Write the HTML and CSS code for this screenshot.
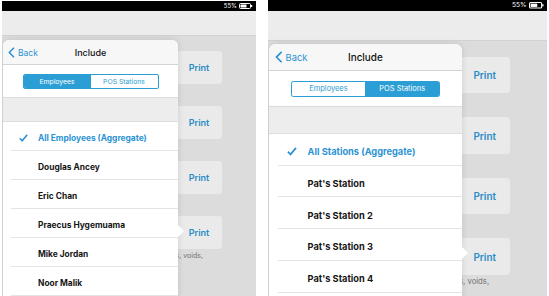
FILE: index.html
```html
<!DOCTYPE html>
<html lang="en">
<head>
    <meta charset="UTF-8">
    <meta name="viewport" content="width=device-width, initial-scale=1.0">
    <title>Include</title>
    <link rel="stylesheet" href="styles.css">
</head>
<body>
    <div class="screens">
        <!-- Employees tab -->
        <div class="device">
            <div class="status-bar">
                <span class="battery-text">55%</span>
                <svg class="battery" width="14" height="6" viewBox="0 0 14 6">
                    <rect x="0.5" y="0.5" width="11" height="5" rx="1" fill="none" stroke="#fff"/>
                    <rect x="1.5" y="1.5" width="6" height="3" fill="#fff"/>
                    <rect x="12" y="2" width="1.2" height="2" fill="#fff"/>
                </svg>
            </div>
            <div class="nav-bar"></div>
            <div class="content">
                <div class="reports">
                    <div class="print-card">Print</div>
                    <div class="print-card">Print</div>
                    <div class="print-card">Print</div>
                    <div class="print-card">Print</div>
                    <p class="report-note">Includes sales, refunds, voids,</p>
                </div>

                <div class="popover">
                    <div class="popover-header">
                        <a class="back-link">
                            <svg width="7" height="11" viewBox="0 0 7 11"><polyline points="6,0.8 1.3,5.5 6,10.2" fill="none" stroke="#2b93d3" stroke-width="1.5"/></svg>
                            <span>Back</span>
                        </a>
                        <span class="popover-title">Include</span>
                    </div>
                    <div class="segment-wrap">
                        <div class="segment">
                            <span class="segment-item active">Employees</span>
                            <span class="segment-item">POS Stations</span>
                        </div>
                    </div>
                    <div class="spacer-band"></div>
                    <ul class="choice-list">
                        <li class="choice selected">
                            <svg class="check" width="9" height="8" viewBox="0 0 9 8"><polyline points="0.8,4.3 3.2,6.7 8.2,0.8" fill="none" stroke="#2b93d3" stroke-width="1.6"/></svg>
                            All Employees (Aggregate)
                        </li>
                        <li class="choice">Douglas Ancey</li>
                        <li class="choice">Eric Chan</li>
                        <li class="choice">Praecus Hygemuama</li>
                        <li class="choice">Mike Jordan</li>
                        <li class="choice">Noor Malik</li>
                    </ul>
                </div>
            </div>
        </div>

        <!-- POS Stations tab -->
        <div class="device device-large">
            <div class="status-bar">
                <span class="battery-text">55%</span>
                <svg class="battery" width="14" height="6" viewBox="0 0 14 6">
                    <rect x="0.5" y="0.5" width="11" height="5" rx="1" fill="none" stroke="#fff"/>
                    <rect x="1.5" y="1.5" width="6" height="3" fill="#fff"/>
                    <rect x="12" y="2" width="1.2" height="2" fill="#fff"/>
                </svg>
            </div>
            <div class="nav-bar"></div>
            <div class="content">
                <div class="reports">
                    <div class="print-card">Print</div>
                    <div class="print-card">Print</div>
                    <div class="print-card">Print</div>
                    <div class="print-card">Print</div>
                    <p class="report-note">Includes sales, refunds, voids,</p>
                </div>

                <div class="popover">
                    <div class="popover-header">
                        <a class="back-link">
                            <svg width="7" height="11" viewBox="0 0 7 11"><polyline points="6,0.8 1.3,5.5 6,10.2" fill="none" stroke="#2b93d3" stroke-width="1.5"/></svg>
                            <span>Back</span>
                        </a>
                        <span class="popover-title">Include</span>
                    </div>
                    <div class="segment-wrap">
                        <div class="segment">
                            <span class="segment-item">Employees</span>
                            <span class="segment-item active">POS Stations</span>
                        </div>
                    </div>
                    <div class="spacer-band"></div>
                    <ul class="choice-list">
                        <li class="choice selected">
                            <svg class="check" width="9" height="8" viewBox="0 0 9 8"><polyline points="0.8,4.3 3.2,6.7 8.2,0.8" fill="none" stroke="#2b93d3" stroke-width="1.6"/></svg>
                            All Stations (Aggregate)
                        </li>
                        <li class="choice">Pat's Station</li>
                        <li class="choice">Pat's Station 2</li>
                        <li class="choice">Pat's Station 3</li>
                        <li class="choice">Pat's Station 4</li>
                    </ul>
                </div>
            </div>
        </div>
    </div>
</body>
</html>
```

FILE: styles.css
```css
body {
    margin: 0;
    background: #fff;
    font-family: Inter, "Liberation Sans", Arial, sans-serif;
    overflow: hidden;
}
.screens {
    display: flex;
    align-items: flex-start;
    gap: 12px;
    padding: 1px 0 0 2px;
}
.device {
    width: 254px;
    height: 300px;
    overflow: hidden;
    display: flex;
    flex-direction: column;
    background: #dcdcdc;
}
.device-large {
    zoom: 1.1;
    margin-top: -1px;
}
.device-large .nav-bar {
    height: 26px;
}
.device-large .popover {
    top: 3px;
}
.status-bar {
    height: 10px;
    background: #000;
    display: flex;
    justify-content: flex-end;
    align-items: center;
    gap: 2px;
    padding-right: 3px;
}
.battery-text {
    color: #fff;
    font-size: 6px;
    line-height: 1;
}
.nav-bar {
    height: 24px;
    background: #ececec;
    border-bottom: 1px solid #d2d2d2;
}
.content {
    position: relative;
    flex: 1;
}
.reports {
    display: flex;
    flex-direction: column;
    align-items: flex-end;
    gap: 22px;
    padding: 15px 34px 0 0;
}
.print-card {
    width: 46px;
    height: 33px;
    box-sizing: border-box;
    background: #eaeaea;
    border-radius: 3px;
    display: flex;
    align-items: center;
    justify-content: center;
    color: #2a8cc6;
    font-size: 9px;
    font-weight: 600;
}
.report-note {
    margin: -20px 19px 0 0;
    font-size: 7px;
    color: #707070;
    white-space: nowrap;
}
.popover {
    position: absolute;
    left: 1px;
    top: 4px;
    bottom: 0;
    width: 175px;
    background: #fff;
    border-radius: 6px 6px 0 0;
    box-shadow: 0 0 6px rgba(0, 0, 0, 0.12);
}
.popover::after {
    content: "";
    position: absolute;
    right: -6px;
    top: 185px;
    border-left: 6px solid #fff;
    border-top: 6px solid transparent;
    border-bottom: 6px solid transparent;
}
.popover-header {
    position: relative;
    height: 24px;
    background: #f7f7f7;
    border-radius: 6px 6px 0 0;
    border-bottom: 1px solid #d4d4d4;
    display: flex;
    align-items: center;
    justify-content: center;
}
.back-link {
    position: absolute;
    left: 5px;
    top: 7px;
    display: flex;
    align-items: center;
    gap: 3px;
    color: #2b93d3;
    font-size: 8.5px;
}
.popover-title {
    font-size: 9px;
    font-weight: 500;
    color: #111;
}
.segment-wrap {
    height: 32px;
    display: flex;
    align-items: center;
    justify-content: center;
    border-bottom: 1px solid #dcdcdc;
}
.segment {
    display: flex;
    width: 136px;
    height: 15px;
    box-sizing: border-box;
    border: 1px solid #2b9ed5;
    border-radius: 2px;
    overflow: hidden;
}
.segment-item {
    flex: 1;
    display: flex;
    align-items: center;
    justify-content: center;
    font-size: 6.8px;
    color: #2b9ed5;
}
.segment-item.active {
    background: #2b9ed5;
    color: #fff;
}
.spacer-band {
    height: 23px;
    background: #ededed;
    border-bottom: 1px solid #dedede;
}
.choice-list {
    list-style: none;
    margin: 0;
    padding: 0 0 0 8px;
}
.choice {
    position: relative;
    box-sizing: border-box;
    height: 29px;
    border-bottom: 1px solid #e4e4e4;
    display: flex;
    align-items: center;
    padding: 4px 0 0 27px;
    font-size: 8.4px;
    font-weight: 700;
    color: #151515;
}
.choice.selected {
    color: #2b93d3;
}
.check {
    position: absolute;
    left: 8px;
    top: 12px;
}
```
